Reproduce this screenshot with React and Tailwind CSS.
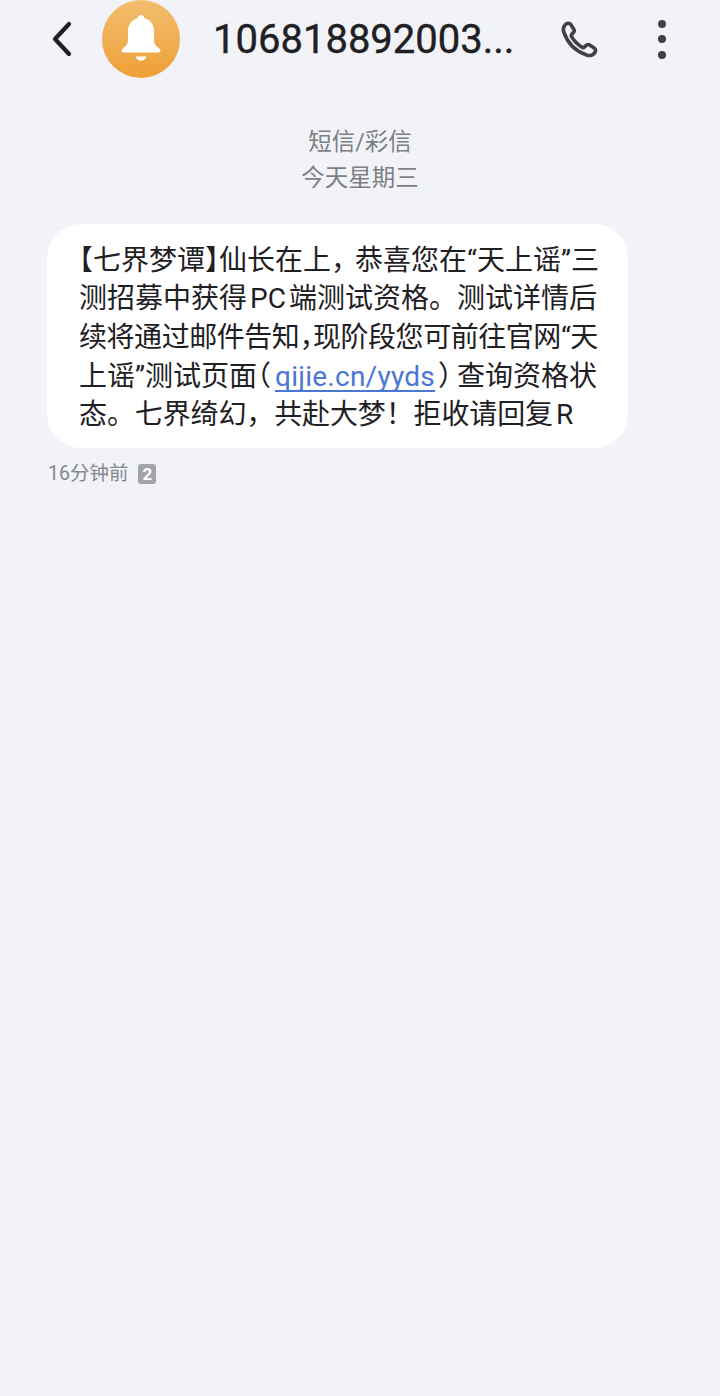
import React from 'react';

const cjk = "font-['Roboto','Noto_Sans_CJK_SC',sans-serif]";
// half-width punctuation, the reference sets these narrow
const halt = "[font-feature-settings:'halt']";

const BellIcon = () => (
  <svg width="40" height="48" viewBox="0 0 40 48" fill="#fff">
    <path d="M20 0c1.800 0 3.200 1.300 3.300 3 5.800 1.500 9.700 6.500 9.700 12.800v9.700c0 3 1.300 4.800 4.300 7.300 1.200 1 2.200 2 2.200 3 0 1-.8 1.700-2 1.700H2.500c-1.200 0-2-.7-2-1.700 0-1 1-2 2.200-3 3-2.500 4.300-4.300 4.300-7.300v-9.700C7 9.500 10.900 4.500 16.700 3 16.800 1.300 18.200 0 20 0z" />
    <path d="M15.500 41.500h9c.5 0 .8.400.6.900-.7 1.900-2.700 3.100-5.100 3.100s-4.400-1.200-5.100-3.100c-.2-.5.100-.9.600-.9z" />
  </svg>
);

const PhoneIcon = () => (
  <svg width="40" height="40" viewBox="0 0 40 40" fill="none" stroke="#3f4145" strokeWidth="3.600" strokeLinejoin="round">
    <path d="M4 7.500c1-2 2.800-3.300 4.500-3.300 1 0 1.700.5 2.300 1.400l3 4.600c.7 1.100.6 2.200-.2 3.100l-2 2.200c-.5.600-.6 1.200-.2 1.900 2.700 4.700 6.300 8.300 11 11 .7.400 1.300.3 1.900-.2l2.200-2c.9-.8 2-.9 3.100-.2l4.600 3c.9.600 1.400 1.300 1.400 2.300 0 1.700-1.300 3.500-3.300 4.500-2 1-4 .9-6.200 0C15 32 8 25 4 13.700c-.9-2.200-1-4.200 0-6.200z" />
  </svg>
);

const Header = () => (
  <div className="flex h-[78px] items-center">
    <svg className="ml-[50px] shrink-0" width="24" height="38" viewBox="0 0 24 38" fill="none" stroke="#1f2023" strokeWidth="4.200" strokeLinecap="round" strokeLinejoin="round">
      <path d="M19 4 L5 19 L19 34" />
    </svg>
    <div className="ml-[28px] flex h-[78px] w-[78px] shrink-0 items-center justify-center rounded-full bg-gradient-to-b from-[#f2bd6c] to-[#ef9f35]">
      <BellIcon />
    </div>
    <div className="mt-[2px] ml-[33px] w-[300px] shrink-0 font-['Roboto',sans-serif] text-[40px] leading-[76px] whitespace-nowrap text-[#1f2023] [-webkit-text-stroke:0.4px_#1f2023]">
      106818892003...
    </div>
    <div className="ml-[47px] shrink-0"><PhoneIcon /></div>
    <div className="ml-[58px] flex shrink-0 flex-col gap-[7.500px]">
      <span className="h-[8px] w-[8px] rounded-full bg-[#3f4145]" />
      <span className="h-[8px] w-[8px] rounded-full bg-[#3f4145]" />
      <span className="h-[8px] w-[8px] rounded-full bg-[#3f4145]" />
    </div>
  </div>
);

export default function App() {
  return (
    <div className={`min-h-[1396px] bg-[#f1f3f8] ${cjk}`}>
      <Header />

      <div className="mt-[46px] text-center text-[23.500px] leading-[36px] text-[#7d7f83]">
        <div>短信/彩信</div>
        <div>今天星期三</div>
      </div>

      <div className="mt-[28px] ml-[47px] h-[224px] w-[581px] rounded-[34px] bg-white pt-[17.500px] pl-[32px] text-[28px] leading-[38.700px] whitespace-nowrap text-[#1f2023]">
        <div>
          <span className={halt}>【</span>七界梦谭<span className={halt}>】</span>仙长在上<span className={`${halt} mr-[10px]`}>，</span>恭喜您在“天上谣”三
        </div>
        <div>
          测招募中获得<span className="mx-[3px]">PC</span>端测试资格。测试详情后
        </div>
        <div className="tracking-[-0.45px]">
          续将通过邮件告知<span className={halt}>，</span>现阶段您可前往官网“天
        </div>
        <div>
          上谣”测试页面<span className={`${halt} mr-[4px]`}>（</span><span className="tracking-[0.25px] text-[#4a76d4] underline underline-offset-4 [text-decoration-skip-ink:none]">qijie.cn/yyds</span><span className={`${halt} mr-[5px] ml-[3px]`}>）</span>查询资格状
        </div>
        <div className="tracking-[-0.12px]">
          态。七界绮幻，共赴大梦！拒收请回复<span className="ml-[3px]">R</span>
        </div>
      </div>

      <div className="mt-[12px] ml-[48px] flex items-center gap-[10px] text-[19.500px] leading-[28px] text-[#85878b]">
        <span>16分钟前</span>
        <span className="flex h-[20px] w-[18px] items-center justify-center rounded-[3px] bg-[#a3a5a9] text-[17px] leading-none font-bold text-white">2</span>
      </div>
    </div>
  );
}
